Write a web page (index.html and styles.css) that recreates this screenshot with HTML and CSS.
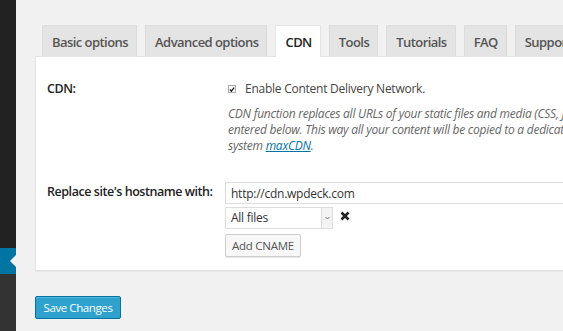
FILE: index.html
```html
<!DOCTYPE html>
<html lang="en">
<head>
  <meta charset="utf-8" />
  <title>CDN settings</title>
  <link rel="stylesheet" href="styles.css">
</head>
<body>
  <div class="admin-menu">
    <div class="menu-top"></div>
    <div class="menu-current"></div>
    <div class="menu-rest"></div>
  </div>
  <div class="wrap">
    <div class="nav-tabs">
      <span class="nav-tab">Basic options</span>
      <span class="nav-tab">Advanced options</span>
      <span class="nav-tab nav-tab-active">CDN</span>
      <span class="nav-tab">Tools</span>
      <span class="nav-tab">Tutorials</span>
      <span class="nav-tab">FAQ</span>
      <span class="nav-tab">Support</span>
    </div>
    <div class="panel">
      <div class="form-row">
        <div class="label">CDN:</div>
        <div class="field">
          <label class="check-line">
            <span class="checkbox">
              <svg width="7" height="7" viewBox="0 0 7 7"><path d="M1 3.5 L2.8 5.4 L6 1.3" fill="none" stroke="#222" stroke-width="1.6"/></svg>
            </span>
            Enable Content Delivery Network.
          </label>
          <p class="description">CDN function replaces all URLs of your static files and media (CSS, JS, images) with the hostname<br>entered below. This way all your content will be copied to a dedicated CDN server. We recommend the<br>system <a href="#">maxCDN</a>.</p>
        </div>
      </div>
      <div class="form-row">
        <div class="label">Replace site's hostname with:</div>
        <div class="field">
          <input class="text-input" type="text" value="http://cdn.wpdeck.com">
          <div class="cname-line">
            <div class="select">
              <span class="select-text">All files</span>
              <span class="select-arrow">
                <svg width="5" height="4" viewBox="0 0 5 4"><path d="M0.5 1 L2.5 3 L4.5 1" fill="none" stroke="#777" stroke-width="1"/></svg>
              </span>
            </div>
            <svg class="remove" width="10" height="10" viewBox="0 0 10 10"><path d="M1.5 1.5 L8.5 8.5 M8.5 1.5 L1.5 8.5" stroke="#222" stroke-width="2.6"/></svg>
          </div>
          <button class="button">Add CNAME</button>
        </div>
      </div>
    </div>
    <button class="button-primary">Save Changes</button>
  </div>
</body>
</html>
```
FILE: styles.css
```css
*{margin:0;padding:0;box-sizing:border-box;}
html,body{width:100%;height:100%;}
body{
  display:flex;
  background:#f1f1f1;
  font-family:"Open Sans","Noto Sans",sans-serif;
  font-size:12px;
  letter-spacing:-0.25px;
  color:#444;
  overflow:hidden;
}
.admin-menu{
  width:16px;
  flex-shrink:0;
  display:flex;
  flex-direction:column;
}
.menu-top{
  height:248px;
  background:#222;
}
.menu-current{
  height:26px;
  background:#0074a2;
  position:relative;
}
.menu-current:after{
  content:"";
  position:absolute;
  right:0;
  top:50%;
  margin-top:-6px;
  border:6px solid transparent;
  border-right-color:#f1f1f1;
  border-left:0;
}
.menu-rest{
  flex:1;
  background:#333;
}
.wrap{
  flex:1;
  padding:25px 0 0 19px;
  min-width:0;
}
.nav-tabs{
  display:flex;
  gap:8px;
  padding-left:7px;
  height:31px;
  white-space:nowrap;
}
.nav-tab{
  display:block;
  height:32px;
  padding:4px 8px 0 9px;
  font-size:13px;
  letter-spacing:-0.55px;
  font-weight:600;
  line-height:24px;
  color:#555;
  background:#e4e4e4;
  border:1px solid #dcdcdc;
  border-bottom:none;
  flex-shrink:0;
}
.nav-tab-active{
  background:#fff;
  color:#222;
  border-color:#e5e5e5;
  position:relative;
  z-index:1;
}
.panel{
  width:640px;
  height:215px;
  background:#fff;
  border:1px solid #e3e3e3;
  box-shadow:0 1px 1px rgba(0,0,0,.04);
  padding:22px 0 0 11px;
}
.form-row{
  display:grid;
  grid-template-columns:178px 1fr;
  margin-bottom:28px;
}
.label{
  font-size:12.5px;
  letter-spacing:-0.45px;
  font-weight:600;
  color:#222;
  line-height:20px;
  white-space:nowrap;
}
.check-line{
  display:flex;
  align-items:center;
  gap:9px;
  line-height:20px;
  padding-left:3px;
  white-space:nowrap;
}
.checkbox{
  width:8px;
  height:8px;
  border:1px solid #aaa;
  background:#fff;
  display:flex;
  align-items:center;
  justify-content:center;
}
.description{
  font-style:italic;
  color:#666;
  line-height:16px;
  margin-top:7px;
  padding-left:3px;
  white-space:nowrap;
}
.description a{
  color:#0074a2;
}
.text-input{
  display:block;
  width:400px;
  height:22px;
  border:1px solid #ddd;
  padding:0 5px;
  font-family:inherit;
  font-size:12px;
  letter-spacing:-0.25px;
  color:#333;
}
.cname-line{
  display:flex;
  align-items:flex-start;
  gap:7px;
  margin-top:3px;
}
.select{
  display:flex;
  width:108px;
  height:22px;
  border:1px solid #ddd;
  background:#fff;
}
.select-text{
  flex:1;
  padding-left:5px;
  line-height:20px;
  color:#333;
}
.select-arrow{
  width:11px;
  border-left:1px solid #ddd;
  background:#f3f3f3;
  display:flex;
  align-items:center;
  justify-content:center;
}
.remove{
  margin-top:4px;
}
.button{
  display:block;
  margin-top:5px;
  height:23px;
  width:76px;
  font-family:inherit;
  font-size:11.5px;
  letter-spacing:-0.25px;
  color:#555;
  background:#f7f7f7;
  border:1px solid #ccc;
  border-radius:2px;
  box-shadow:0 1px 0 #e5e5e5;
}
.button-primary{
  display:block;
  margin-top:25px;
  height:23px;
  width:86px;
  font-family:inherit;
  font-size:11.5px;
  letter-spacing:-0.4px;
  color:#fff;
  background:#2ea2cc;
  border:1px solid #0074a2;
  border-radius:2px;
  box-shadow:inset 0 1px 0 rgba(120,200,230,.5);
}
```
